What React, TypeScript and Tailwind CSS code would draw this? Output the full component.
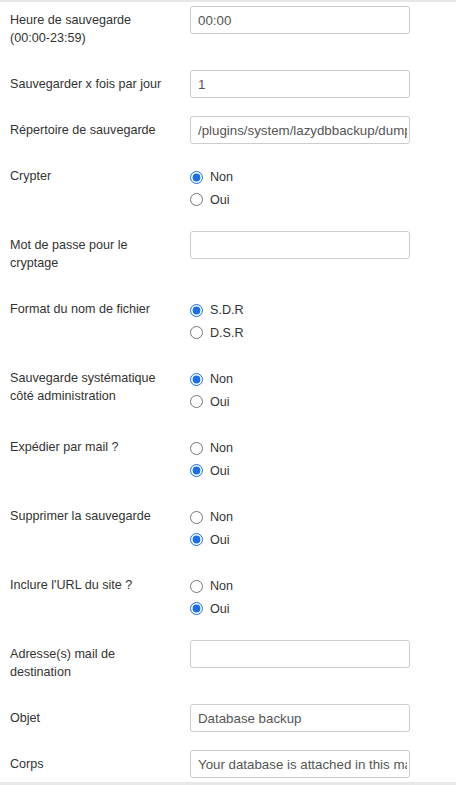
import React from 'react';

type Field =
  | { kind: 'text'; label: string; value: string }
  | { kind: 'radio'; label: string; name: string; options: string[]; checked: number };

const FIELDS: Field[] = [
  { kind: 'text', label: 'Heure de sauvegarde (00:00-23:59)', value: '00:00' },
  { kind: 'text', label: 'Sauvegarder x fois par jour', value: '1' },
  { kind: 'text', label: 'Répertoire de sauvegarde', value: '/plugins/system/lazydbbackup/dump' },
  { kind: 'radio', label: 'Crypter', name: 'crypt', options: ['Non', 'Oui'], checked: 0 },
  { kind: 'text', label: 'Mot de passe pour le cryptage', value: '' },
  { kind: 'radio', label: 'Format du nom de fichier', name: 'format', options: ['S.D.R', 'D.S.R'], checked: 0 },
  { kind: 'radio', label: 'Sauvegarde systématique côté administration', name: 'admin', options: ['Non', 'Oui'], checked: 0 },
  { kind: 'radio', label: 'Expédier par mail ?', name: 'mail', options: ['Non', 'Oui'], checked: 1 },
  { kind: 'radio', label: 'Supprimer la sauvegarde', name: 'delete', options: ['Non', 'Oui'], checked: 1 },
  { kind: 'radio', label: "Inclure l'URL du site ?", name: 'url', options: ['Non', 'Oui'], checked: 1 },
  { kind: 'text', label: 'Adresse(s) mail de destination', value: '' },
  { kind: 'text', label: 'Objet', value: 'Database backup' },
  { kind: 'text', label: 'Corps', value: 'Your database is attached in this mail' },
];

export default function App() {
  return (
    <div className="w-[456px] h-[785px] overflow-hidden bg-white border-t-2 border-[#e6e6e6] font-['Liberation_Sans',Arial,sans-serif] text-[12.6px] text-[#333]">
      <div className="pt-[4px] pl-[10px]">
        {FIELDS.map((f, i) => (
          <div key={i} className={i === FIELDS.length - 1 ? 'flex' : 'flex mb-[18px]'}>
            <label className="w-[180px] pr-[18px] py-[5px] leading-[18px] shrink-0">{f.label}</label>
            {f.kind === 'text' ? (
              <input
                type="text"
                defaultValue={f.value}
                className="w-[220px] h-[28px] border border-[#ccc] rounded-[3px] pl-[7px] pr-[2px] text-[13.3px] text-[#555] leading-[18px] outline-none bg-white"
              />
            ) : (
              <div className="pt-[6px]">
                {f.options.map((opt, j) => (
                  <label key={opt} className="flex items-center gap-[7px] h-[18px] mb-[4.5px] leading-[18px]">
                    <input
                      type="radio"
                      name={f.name}
                      defaultChecked={j === f.checked}
                      className="m-0 w-[13px] h-[13px] accent-[#1a6fe3]"
                    />
                    <span>{opt}</span>
                  </label>
                ))}
              </div>
            )}
          </div>
        ))}
        <div className="h-[4px]" />
      </div>
      <div className="h-[3px] bg-[#e8e8e8]" />
    </div>
  );
}
